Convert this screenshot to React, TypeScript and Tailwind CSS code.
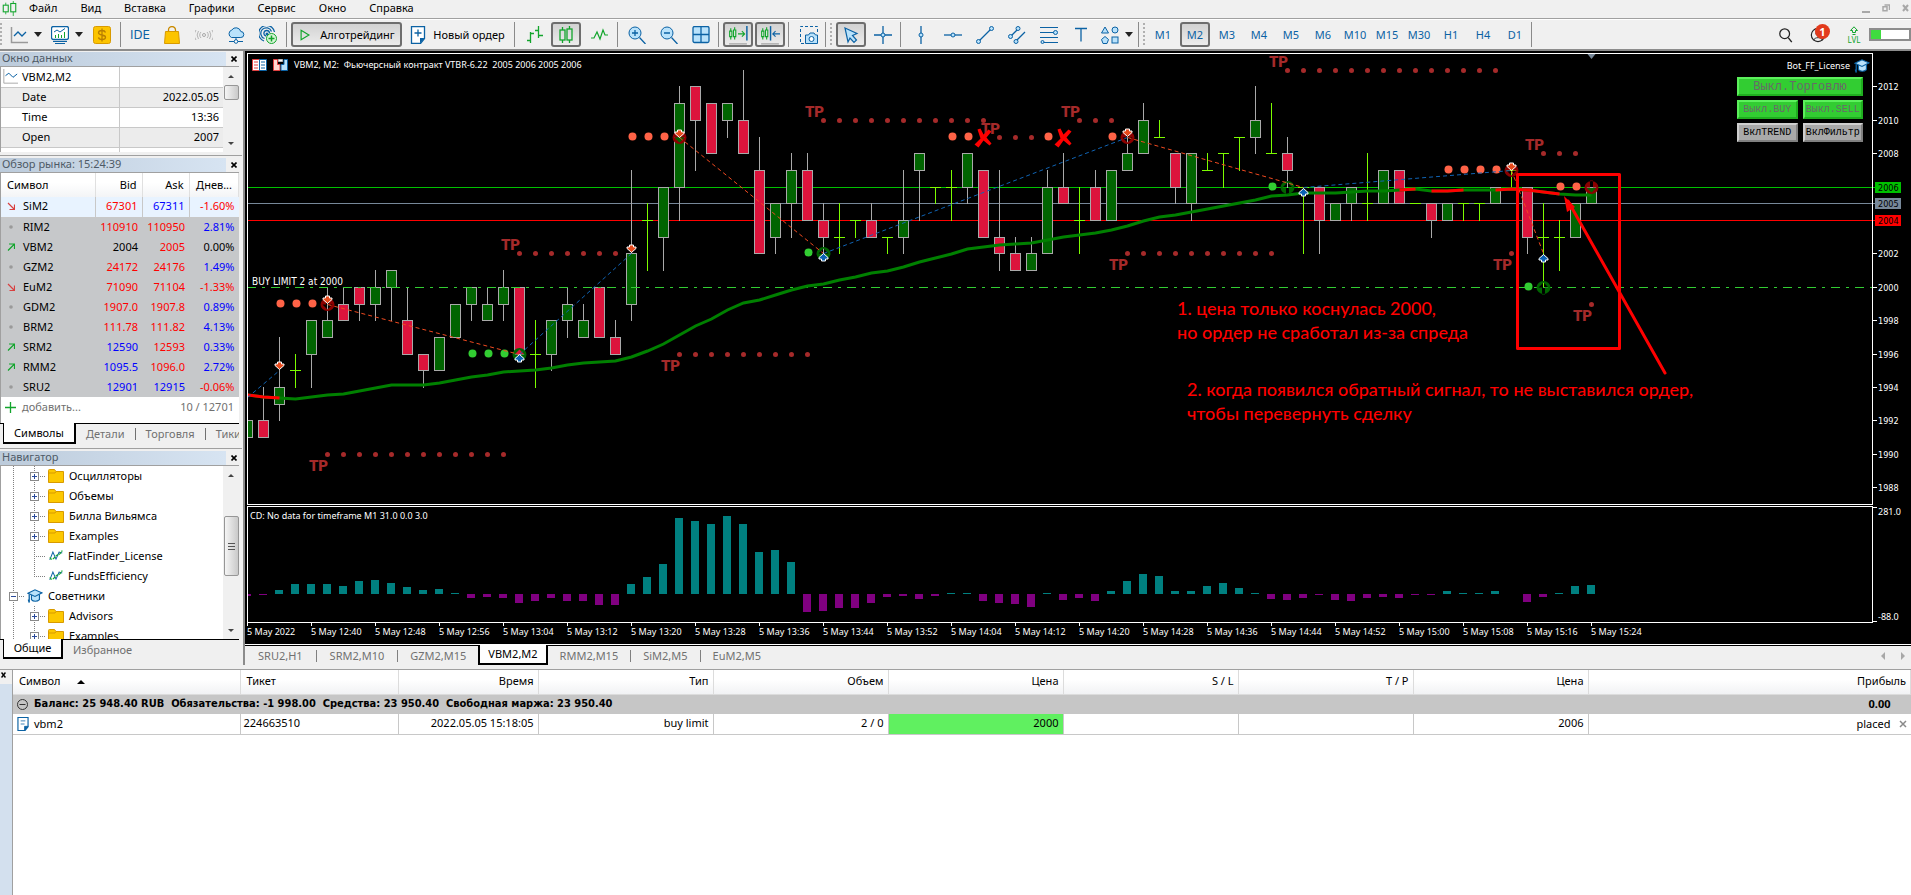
import type React from "react"

type Tone = "red" | "blue" | "black"

const MENU = ["Файл", "Вид", "Вставка", "Графики", "Сервис", "Окно", "Справка"]
const TIMEFRAMES = ["M1", "M2", "M3", "M4", "M5", "M6", "M10", "M15", "M30", "H1", "H4", "D1"]
const CHART_TABS = ["SRU2,H1", "SRM2,M10", "GZM2,M15", "VBM2,M2", "RMM2,M15", "SiM2,M5", "EuM2,M5"]

const DATA_ROWS = [
  ["Date", "2022.05.05"],
  ["Time", "13:36"],
  ["Open", "2007"],
]

interface Quote {
  symbol: string
  dir: "up" | "down" | "flat"
  bid: string
  bidTone: Tone
  ask: string
  askTone: Tone
  day: string
  dayTone: Tone
}

const QUOTES: Quote[] = [
  { symbol: "SiM2", dir: "down", bid: "67301", bidTone: "red", ask: "67311", askTone: "blue", day: "-1.60%", dayTone: "red" },
  { symbol: "RIM2", dir: "flat", bid: "110910", bidTone: "red", ask: "110950", askTone: "red", day: "2.81%", dayTone: "blue" },
  { symbol: "VBM2", dir: "up", bid: "2004", bidTone: "black", ask: "2005", askTone: "red", day: "0.00%", dayTone: "black" },
  { symbol: "GZM2", dir: "flat", bid: "24172", bidTone: "red", ask: "24176", askTone: "red", day: "1.49%", dayTone: "blue" },
  { symbol: "EuM2", dir: "down", bid: "71090", bidTone: "red", ask: "71104", askTone: "red", day: "-1.33%", dayTone: "red" },
  { symbol: "GDM2", dir: "flat", bid: "1907.0", bidTone: "red", ask: "1907.8", askTone: "red", day: "0.89%", dayTone: "blue" },
  { symbol: "BRM2", dir: "flat", bid: "111.78", bidTone: "red", ask: "111.82", askTone: "red", day: "4.13%", dayTone: "blue" },
  { symbol: "SRM2", dir: "up", bid: "12590", bidTone: "blue", ask: "12593", askTone: "red", day: "0.33%", dayTone: "blue" },
  { symbol: "RMM2", dir: "up", bid: "1095.5", bidTone: "blue", ask: "1096.0", askTone: "red", day: "2.72%", dayTone: "blue" },
  { symbol: "SRU2", dir: "flat", bid: "12901", bidTone: "blue", ask: "12915", askTone: "blue", day: "-0.06%", dayTone: "red" },
]

const TONES: Record<Tone, string> = {
  red: "text-[#ff0000]",
  blue: "text-[#0000ff]",
  black: "text-black",
}

// [open, high, low, close], one entry for each bar
const CANDLES: [number, number, number, number][] = [
  [1991, 1992, 1991, 1992], [1992, 1994, 1991, 1991], [1993, 1997, 1992, 1994], [1995, 1996, 1994, 1995],
  [1996, 1998, 1994, 1998], [1997, 2000, 1997, 1998], [1999, 2000, 1998, 1998], [2000, 2000, 1998, 1999],
  [1999, 2001, 1998, 2000], [2000, 2001, 1998, 2001], [1998, 2000, 1996, 1996], [1996, 1996, 1994, 1995],
  [1995, 1997, 1995, 1997], [1997, 1999, 1997, 1999], [1999, 2000, 1998, 2000], [1998, 2000, 1998, 1999],
  [1999, 2001, 1998, 2000], [2000, 2000, 1996, 1996], [1996, 1998, 1994, 1996], [1996, 1998, 1995, 1998],
  [1998, 2000, 1997, 1999], [1997, 1999, 1997, 1998], [2000, 2000, 1997, 1997], [1997, 1998, 1996, 1996],
  [1999, 2007, 1998, 2002], [2004, 2005, 2001, 2004], [2003, 2006, 2001, 2006], [2006, 2012, 2004, 2011],
  [2012, 2012, 2007, 2010], [2011, 2011, 2008, 2008], [2010, 2011, 2009, 2011], [2010, 2013, 2008, 2008],
  [2007, 2009, 2002, 2002], [2003, 2005, 2002, 2005], [2005, 2008, 2003, 2007], [2007, 2008, 2004, 2004],
  [2004, 2005, 2002, 2003], [2003, 2005, 2002, 2003], [2004, 2004, 2003, 2004], [2004, 2005, 2003, 2003],
  [2003, 2003, 2002, 2003], [2003, 2007, 2002, 2004], [2007, 2008, 2004, 2008], [2006, 2006, 2005, 2006],
  [2006, 2007, 2004, 2006], [2006, 2008, 2005, 2008], [2007, 2007, 2003, 2003], [2003, 2007, 2001, 2002],
  [2002, 2003, 2001, 2001], [2001, 2003, 2001, 2002], [2002, 2007, 2002, 2006], [2006, 2008, 2005, 2005],
  [2004, 2006, 2002, 2004], [2006, 2007, 2004, 2004], [2004, 2007, 2004, 2007], [2007, 2009, 2007, 2008],
  [2008, 2011, 2008, 2010], [2009, 2010, 2009, 2009], [2008, 2008, 2005, 2006], [2005, 2008, 2004, 2008],
  [2007, 2008, 2007, 2007], [2008, 2008, 2006, 2008], [2009, 2009, 2007, 2009], [2009, 2012, 2008, 2010],
  [2008, 2011, 2008, 2008], [2008, 2009, 2006, 2007], [2006, 2006, 2002, 2006], [2006, 2006, 2002, 2004],
  [2004, 2005, 2004, 2005], [2005, 2006, 2004, 2006], [2005, 2008, 2004, 2005], [2005, 2007, 2005, 2007],
  [2007, 2007, 2005, 2005], [2005, 2005, 2005, 2005], [2005, 2005, 2003, 2004], [2004, 2005, 2004, 2005],
  [2005, 2005, 2004, 2005], [2005, 2005, 2004, 2005], [2005, 2006, 2005, 2006], [2007, 2007, 2006, 2007],
  [2006, 2006, 2002, 2003], [2003, 2005, 2000, 2003], [2003, 2004, 2001, 2003], [2003, 2005, 2003, 2005],
  [2005, 2006, 2005, 2006],
]

// Moving average, y inside the price pane
const AVERAGE = [
  341, 343, 344, 345, 343, 341, 340, 337, 334, 331, 331, 331, 329, 326, 323, 321, 318, 317, 316, 314, 311, 309, 308,
  307, 303, 297, 290, 281, 272, 265, 256, 249, 246, 241, 236, 232, 230, 226, 223, 219, 217, 213, 208, 204, 200, 195,
  193, 191, 190, 189, 186, 183, 181, 179, 176, 172, 167, 163, 161, 158, 155, 152, 149, 146, 142, 141, 139, 139, 139,
  138, 137, 137, 136, 135, 137, 137, 136, 136, 136, 135, 136, 138, 140, 141, 141,
]
const AVERAGE_DOWN = [[0, 2], [72, 73], [74, 76], [78, 82]]

const DELTA = [
  -2, -1, 4, 10, 10, 10, 8, 13, 14, 11, 7, 4, 5, 1, -4, -3, -4, -9, -7, -4, -7, -7, -11, -11, 10, 17, 30, 76, 73, 70,
  78, 70, 42, 44, 32, -18, -17, -14, -14, -9, -3, -2, -5, -2, 1, 1, -7, -9, -10, -13, 1, -6, -4, -7, 3, 13, 20, 18, 3,
  3, 8, 11, 6, 1, -5, -6, -4, -1, -6, -7, -4, -3, -4, -1, -1, 3, 1, 1, 3, 0, -8, -3, 1, 8, 9,
]

// [first bar, last bar, price, 1 when the label stands above the dots]
const TARGETS = [
  [5, 16, 1990, 0], [17, 23, 2002, 1], [27, 35, 1996, 0], [36, 46, 2010, 1], [47, 51, 2009, 1], [52, 54, 2010, 1],
  [55, 64, 2002, 0], [65, 78, 2013, 1], [79, 79, 2002, 0], [81, 83, 2008, 1], [84, 84, 1999, 0],
]

const SELL_DOTS = [
  [2, 1999], [3, 1999], [4, 1999], [24, 2009], [25, 2009], [26, 2009], [44, 2009], [45, 2009], [50, 2009],
  [54, 2009], [75, 2007], [76, 2007], [77, 2007], [78, 2007], [82, 2006], [83, 2006],
]
const BUY_DOTS = [[14, 1996], [15, 1996], [16, 1996], [35, 2002], [64, 2006], [80, 2000]]
const SELL_SIGNALS = [[5, 1999], [27, 2009], [55, 2009], [79, 2007], [84, 2006]]
const BUY_SIGNALS = [[17, 1996], [36, 2002], [65, 2006], [81, 2000]]
const CANCELLED = [[46, 2009], [51, 2009]]

// [bar, y] of executed deals
const SELL_DEALS = [[2, 311], [5, 245], [24, 194], [27, 79], [55, 78], [79, 112]]
const BUY_DEALS = [[17, 304], [36, 203], [66, 138], [81, 204]]

// [bar, price, bar, price, colour]
const TRADES: [number, number, number, number, string][] = [
  [0, 1993.4, 2, 1995, "#1064b4"], [5, 1999, 17, 1996, "#f04a20"], [17, 1996, 24, 2002, "#1064b4"],
  [27, 2009, 36, 2002, "#f04a20"], [36, 2002, 55, 2009, "#1064b4"], [55, 2009, 66, 2006, "#f04a20"],
  [66, 2006, 79, 2007, "#1064b4"], [79, 2007, 81, 2002, "#f04a20"],
]

const TIMES = [
  "2022", "12:40", "12:48", "12:56", "13:04", "13:12", "13:20", "13:28", "13:36", "13:44", "13:52", "14:04",
  "14:12", "14:20", "14:28", "14:36", "14:44", "14:52", "15:00", "15:08", "15:16", "15:24",
]
const PRICES = [2012, 2010, 2008, 2002, 2000, 1998, 1996, 1994, 1992, 1990, 1988]

const barX = (bar: number) => 16 * bar - 0.5
const priceY = (price: number) => Math.floor(233.3 - (price - 2000) * 16.7) + 0.5

const Icon: React.FC<{ size?: number; className?: string; children: React.ReactNode }> = ({
  size = 18,
  className = "",
  children,
}) => (
  <svg width={size} height={size} viewBox="0 0 18 18" fill="none" className={`shrink-0 ${className}`} aria-hidden="true">
    {children}
  </svg>
)

const BLUE = "#0b62a4"
const GREEN = "#12a52c"
const SKY = "#b9e2fb"

const Separator = () => <div className="h-[25px] w-px shrink-0 bg-[#8a8a8a]" />

const Grip = () => (
  <div className="h-6 w-[2px] shrink-0 bg-[repeating-linear-gradient(#b0b0b0_0_2px,transparent_2px_4px)]" />
)

const Caret = () => <span className="h-0 w-0 shrink-0 border-x-4 border-t-[5px] border-x-transparent border-t-[#222]" />

const ToolButton: React.FC<{ label: string; width?: string; active?: boolean; children: React.ReactNode }> = ({
  label,
  width = "w-8",
  active = false,
  children,
}) => (
  <button
    type="button"
    aria-label={label}
    className={`flex h-[25px] shrink-0 items-center justify-center gap-[6px] ${width} ${
      active ? "rounded-[3px] border-2 border-[#6e6e6e] bg-[linear-gradient(#d2d2d2,#ececec)]" : ""
    }`}
  >
    {children}
  </button>
)

const CandlesIcon = () => (
  <Icon>
    <path d="M5.500 1v3M5.500 14v3M12.500 0v3M12.500 14v3" stroke={GREEN} strokeWidth="1.300" />
    <rect x="3" y="4" width="5" height="10" stroke={GREEN} strokeWidth="1.300" />
    <rect x="10" y="3" width="5" height="11" stroke={GREEN} strokeWidth="1.300" />
  </Icon>
)

const HatIcon: React.FC<{ size?: number }> = ({ size = 16 }) => (
  <Icon size={size}>
    <path d="M5 7v6c2 2.500 6.500 2.500 9 0V7" fill={SKY} stroke={BLUE} strokeWidth="1.300" />
    <path d="M1 6l8-4 8 3.500-8 4z" fill={SKY} stroke={BLUE} strokeWidth="1.300" />
    <path d="M2.500 7v9M1.500 13l1 3.500" stroke={BLUE} strokeWidth="1.500" />
  </Icon>
)

const MenuBar = () => (
  <header className="flex h-[19px] items-center border-b border-[#a0a0a0] pb-[2px]">
    <Icon size={15} className="ml-[2px]">
      <path d="M4.500 2v3M4.500 13v3M13.500 0v3M13.500 13v5" stroke={GREEN} />
      <rect x="1.500" y="5" width="6" height="8" stroke={GREEN} strokeWidth="1.300" />
      <rect x="10.500" y="3" width="6" height="10" stroke={GREEN} strokeWidth="1.300" />
    </Icon>
    <nav className="flex flex-1 gap-[23px] pl-3">
      {MENU.map((item) => (
        <button key={item} type="button">
          {item}
        </button>
      ))}
    </nav>
    <div className="flex items-center gap-3 pr-[2px] text-[#a8a8a8]">
      <button type="button" aria-label="Свернуть" className="mt-2 h-[2px] w-2 bg-[#a8a8a8]" />
      <button type="button" aria-label="Восстановить">
        <svg width="8" height="8" viewBox="0 0 8 8" fill="none" stroke="currentColor" strokeWidth="1.500">
          <path d="M2.500 1h5v5M1 2.800h4v4H1z" />
        </svg>
      </button>
      <button type="button" aria-label="Закрыть">
        <svg width="7" height="8" viewBox="0 0 7 8" fill="none" stroke="currentColor" strokeWidth="2">
          <path d="M1 1l5 6M6 1L1 7" />
        </svg>
      </button>
    </div>
  </header>
)

const Toolbar = () => (
  <div className="flex h-8 items-center overflow-hidden border-t border-b-2 border-t-white border-b-[#8c8c8c]">
    <Grip />
    <div className="w-[2px] shrink-0" />
    <ToolButton label="Новый график" width="w-[44px]">
      <Icon>
        <path d="M1.500 1v15.500H18" stroke="#9a9a9a" strokeWidth="1.500" />
        <path d="M4 10l4-4 4 4 4-4" stroke={BLUE} strokeWidth="1.300" />
      </Icon>
      <Caret />
    </ToolButton>
    <ToolButton label="Профили" width="w-[38px]">
      <Icon>
        <rect x="0.500" y="0.500" width="17" height="13" rx="2" fill="#fff" stroke={BLUE} strokeWidth="1.300" />
        <path d="M3 6l3-2 3 2 5-3.500" stroke={BLUE} />
        <path d="M4.500 12V9M7.500 12V8M10.500 12V9M13.500 12V6" stroke={GREEN} />
        <path d="M2 15.500h14M4 17.500h10" stroke={BLUE} />
      </Icon>
      <Caret />
    </ToolButton>
    <ToolButton label="Котировки">
      <Icon>
        <rect x="0.500" y="0.500" width="17" height="17" rx="2" fill="#fcc400" stroke="#d89a00" />
        <path
          d="M12.500 6.500C12 5 10.800 4.500 9 4.500c-2 0-3.500.800-3.500 2.300 0 3.200 7 1.200 7 4.400 0 1.500-1.500 2.300-3.500 2.300-1.800 0-3.200-.700-3.500-2.200M9 2.500v13"
          stroke="#b97f00"
          strokeWidth="1.300"
        />
      </Icon>
    </ToolButton>
    <div className="w-[2px] shrink-0" />
    <Separator />
    <ToolButton label="IDE" width="w-[38px]">
      <span className="font-['DejaVu_Sans_Condensed'] text-[13px] text-[#0b62a4]">IDE</span>
    </ToolButton>
    <ToolButton label="Маркет" width="w-[26px]">
      <Icon>
        <path d="M5.500 6V4a3.500 3.500 0 017 0v2" stroke="#c98a00" strokeWidth="1.300" />
        <path d="M2.500 5.500h13l1 12h-15z" fill="#fcc400" stroke="#d89a00" />
      </Icon>
    </ToolButton>
    <ToolButton label="Сигналы" width="w-[38px]">
      <Icon>
        <circle cx="9" cy="9" r="1.500" stroke="#a8a8a8" />
        <path d="M6 6a4.200 4.200 0 000 6M12 6a4.200 4.200 0 010 6M3.500 5a7 7 0 000 8M14.500 5a7 7 0 010 8M1 4a9 9 0 000 10M17 4a9 9 0 010 10" stroke="#b4b4b4" />
      </Icon>
    </ToolButton>
    <ToolButton label="VPS" width="w-[26px]">
      <Icon>
        <path d="M4.500 11.500a4 4 0 01.300-7.500 5 5 0 019 1.500 3 3 0 010 6z" fill={SKY} stroke={BLUE} />
        <path d="M9 12v3M2 15.500h14" stroke={BLUE} />
        <circle cx="9" cy="15.500" r="1.800" fill="#fff" stroke={BLUE} />
      </Icon>
    </ToolButton>
    <ToolButton label="Сеть" width="w-[37px]">
      <Icon>
        <path d="M5 15A8 8 0 1115.500 6M5.500 12.500a5.500 5.500 0 117-7M7 10a2.800 2.800 0 113.500-3" stroke={BLUE} strokeWidth="1.300" />
        <circle cx="8" cy="8" r="1.500" fill={BLUE} />
        <circle cx="12.500" cy="12.500" r="5" fill="#d8f5d8" stroke={GREEN} />
        <path d="M12.500 9.500v6M9.500 12.500h6" stroke={GREEN} strokeWidth="1.500" />
      </Icon>
    </ToolButton>
    <Separator />
    <div className="w-1 shrink-0" />
    <button
      type="button"
      className="flex h-[25px] w-[111px] shrink-0 items-center justify-center gap-2 rounded-[3px] border-2 border-[#6e6e6e] bg-[linear-gradient(#d2d2d2,#ececec)]"
    >
      <Icon size={14}>
        <path d="M4 3v12l10-6z" stroke={GREEN} strokeWidth="1.500" />
      </Icon>
      Алготрейдинг
    </button>
    <button type="button" className="flex h-[25px] w-[110px] shrink-0 items-center justify-center gap-[6px]">
      <Icon>
        <path d="M2.500 0.500h13v12l-4 5h-9z" fill="#fff" stroke={BLUE} strokeWidth="1.300" />
        <path d="M15.500 12l-4.500 5.500V12z" fill={BLUE} />
        <path d="M9 3.500v7M5.500 7h7" stroke={BLUE} strokeWidth="1.300" />
      </Icon>
      Новый ордер
    </button>
    <div className="w-[2px] shrink-0" />
    <Separator />
    <div className="w-1 shrink-0" />
    <ToolButton label="Бары">
      <Icon>
        <path d="M4.500 6v11M1 14.500h3.500M4.500 7.500H8M12.500 0v12M9 4.500h3.500M12.500 9.500H17" stroke={GREEN} strokeWidth="1.300" />
      </Icon>
    </ToolButton>
    <ToolButton label="Свечи" width="w-[30px]" active>
      <CandlesIcon />
    </ToolButton>
    <div className="w-[2px] shrink-0" />
    <ToolButton label="Линия">
      <Icon>
        <path d="M1 12h3l3-6 3 7 3-9 2 5h3" stroke={GREEN} strokeWidth="1.200" />
      </Icon>
    </ToolButton>
    <div className="w-[2px] shrink-0" />
    <Separator />
    <div className="w-[3px] shrink-0" />
    <ToolButton label="Увеличить">
      <Icon>
        <circle cx="7" cy="7" r="6" fill={SKY} stroke={BLUE} />
        <path d="M7 4v6M4 7h6M11.500 11.500L17.500 18" stroke={BLUE} strokeWidth="1.300" />
      </Icon>
    </ToolButton>
    <ToolButton label="Уменьшить">
      <Icon>
        <circle cx="7" cy="7" r="6" fill={SKY} stroke={BLUE} />
        <path d="M4 7h6M11.500 11.500L17.500 18" stroke={BLUE} strokeWidth="1.300" />
      </Icon>
    </ToolButton>
    <ToolButton label="Плитка">
      <Icon>
        <rect x="1" y="0.500" width="16" height="16" rx="1.500" fill={SKY} stroke={BLUE} strokeWidth="1.300" />
        <path d="M9 0.500v16M1 8.500h16" stroke={BLUE} strokeWidth="1.300" />
      </Icon>
    </ToolButton>
    <div className="w-px shrink-0" />
    <Separator />
    <div className="w-1 shrink-0" />
    <ToolButton label="Автопрокрутка" width="w-[30px]" active>
      <Icon size={20}>
        <path d="M2.500 3v10M6 2v11" stroke={GREEN} />
        <path d="M1.500 5.500h2v5h-2zM5 4.500h2v6H5z" fill="#eee" stroke={GREEN} />
        <path d="M9 8h6M12.500 5.500L15 8l-2.500 2.500" stroke={GREEN} />
        <path d="M17 1v13" stroke={BLUE} strokeWidth="1.300" />
        <path d="M1 17h16" stroke="#9a9a9a" />
      </Icon>
    </ToolButton>
    <div className="w-[2px] shrink-0" />
    <ToolButton label="Сдвиг графика" width="w-[30px]" active>
      <Icon size={20}>
        <path d="M2.500 3v10M6 2v11" stroke={GREEN} />
        <path d="M1.500 5.500h2v5h-2zM5 4.500h2v6H5z" fill="#eee" stroke={GREEN} />
        <path d="M9.500 1v13" stroke={BLUE} strokeWidth="1.300" />
        <path d="M11.500 8H18M14 5.500L11.500 8l2.500 2.500" stroke={BLUE} />
        <path d="M1 17h16" stroke="#9a9a9a" />
      </Icon>
    </ToolButton>
    <div className="w-[3px] shrink-0" />
    <Separator />
    <div className="w-1 shrink-0" />
    <ToolButton label="Снимок экрана">
      <Icon>
        <path d="M4 17.500H0.500V0.500h17V7" stroke={BLUE} strokeDasharray="3 2" />
        <path d="M5.500 9h3l1.500-2h4l1.500 2h2v8.500h-12z" fill={SKY} stroke={BLUE} />
        <circle cx="11.500" cy="13" r="2.500" fill="#fff" stroke={BLUE} />
      </Icon>
    </ToolButton>
    <Separator />
    <div className="w-1 shrink-0" />
    <Grip />
    <div className="w-1 shrink-0" />
    <ToolButton label="Курсор" width="w-[30px]" active>
      <Icon>
        <path d="M3 2l12 5.500-4.500 2 4 4.500-2.500 2.500-4-4.500-2 4z" fill={SKY} stroke={BLUE} strokeWidth="1.200" />
      </Icon>
    </ToolButton>
    <div className="w-px shrink-0" />
    <ToolButton label="Перекрестие">
      <Icon>
        <path d="M9 0v18M0 9h18" stroke={BLUE} strokeWidth="1.300" />
        <circle cx="9" cy="9" r="2" fill={SKY} stroke={BLUE} />
      </Icon>
    </ToolButton>
    <div className="w-px shrink-0" />
    <Separator />
    <div className="w-1 shrink-0" />
    <ToolButton label="Вертикальная линия">
      <Icon>
        <path d="M9 0v18" stroke={BLUE} strokeWidth="1.300" />
        <circle cx="9" cy="9" r="2" fill={SKY} stroke={BLUE} />
      </Icon>
    </ToolButton>
    <ToolButton label="Горизонтальная линия">
      <Icon>
        <path d="M0 9h18" stroke={BLUE} strokeWidth="1.300" />
        <circle cx="9" cy="9" r="2" fill={SKY} stroke={BLUE} />
      </Icon>
    </ToolButton>
    <ToolButton label="Трендовая линия">
      <Icon>
        <path d="M2 16L16 2" stroke={BLUE} strokeWidth="1.300" />
        <circle cx="2.500" cy="15.500" r="2" fill={SKY} stroke={BLUE} />
        <circle cx="15.500" cy="2.500" r="2" fill={SKY} stroke={BLUE} />
      </Icon>
    </ToolButton>
    <ToolButton label="Канал">
      <Icon>
        <path d="M2 11l8-8M8 15l9-9" stroke={BLUE} strokeWidth="1.300" />
        <circle cx="2.500" cy="10.500" r="2" fill={SKY} stroke={BLUE} />
        <circle cx="10" cy="2.500" r="2" fill={SKY} stroke={BLUE} />
        <circle cx="8" cy="15.500" r="2" fill={SKY} stroke={BLUE} />
      </Icon>
    </ToolButton>
    <ToolButton label="Фибоначчи">
      <Icon>
        <path d="M0 1.500h18M0 6.500h14M0 11.500h18M4 16.500h14" stroke={BLUE} strokeWidth="1.200" />
        <circle cx="15.500" cy="6.500" r="2" fill={SKY} stroke={BLUE} />
        <circle cx="2.500" cy="16" r="1.500" fill={SKY} stroke={BLUE} />
      </Icon>
    </ToolButton>
    <ToolButton label="Текст">
      <Icon>
        <path d="M3 2.500h12M9 2.500v13" stroke={BLUE} strokeWidth="1.300" />
      </Icon>
    </ToolButton>
    <ToolButton label="Фигуры" width="w-[40px]">
      <Icon>
        <path d="M4 1l3.500 6H0.500zM4 10.500l3.500 3-1.500 4H2l-1.500-4z" fill={SKY} stroke={BLUE} />
        <circle cx="14" cy="4" r="3" fill={SKY} stroke={BLUE} />
        <rect x="11" y="11" width="6" height="6" fill={SKY} stroke={BLUE} />
      </Icon>
      <Caret />
    </ToolButton>
    <div className="w-px shrink-0" />
    <Separator />
    <div className="w-1 shrink-0" />
    <Grip />
    <div className="w-[2px] shrink-0" />
    {TIMEFRAMES.map((tf) => (
      <button
        key={tf}
        type="button"
        className={`flex h-[25px] shrink-0 items-center justify-center text-[#0b62a4] ${
          tf === "M2" ? "mx-px w-[30px] rounded-[3px] border-2 border-[#6e6e6e] bg-[linear-gradient(#d2d2d2,#ececec)]" : "w-8"
        }`}
      >
        {tf}
      </button>
    ))}
    <Separator />
    <div className="flex-1" />
    <ToolButton label="Поиск" width="w-8">
      <Icon size={16}>
        <circle cx="7.500" cy="7.500" r="5.500" stroke="#222" strokeWidth="1.400" />
        <path d="M11.500 12l4 5" stroke="#222" strokeWidth="1.600" />
      </Icon>
    </ToolButton>
    <button type="button" aria-label="Уведомления" className="relative flex h-[25px] w-8 shrink-0 items-center justify-center">
      <Icon size={16}>
        <circle cx="9" cy="9" r="7.500" stroke="#222" strokeWidth="1.300" />
        <circle cx="9" cy="7" r="2.500" stroke="#222" />
        <path d="M4 15c1-4 9-4 10 0" stroke="#222" />
      </Icon>
      <span className="absolute top-[2px] right-[4px] flex h-[15px] w-[15px] items-center justify-center rounded-full bg-[#e23a1c] text-[11px] font-bold text-white">
        1
      </span>
    </button>
    <div className="flex w-[77px] shrink-0 items-center justify-end gap-[9px]">
      <div className="flex w-3 flex-col items-center text-[8px] leading-[8px] text-[#12a52c]">
        <svg width="10" height="10" viewBox="0 0 10 10" fill="none" stroke={GREEN}>
          <path d="M5 0.800L8.500 4.500h-2v2h-3v-2h-2zM3.500 8.500h3" />
        </svg>
        LVL
      </div>
      <div className="h-[13px] w-[42px] shrink-0 border-2 border-[#8c8c8c] bg-white">
        <div className="h-full w-[10px] bg-[#3fdc3f]" />
      </div>
    </div>
  </div>
)

const PanelTitle: React.FC<{ children: React.ReactNode }> = ({ children }) => (
  <div className="flex h-[14px] items-center">
    <h2 className="h-full flex-1 bg-[linear-gradient(90deg,#bccbdb,#d7e4f2)] pl-[2px] leading-[12px] text-[#4e5a66]">
      {children}
    </h2>
    <button type="button" aria-label="Закрыть" className="flex w-4 items-center justify-center">
      <svg width="6" height="6" viewBox="0 0 6 6" stroke="#000" strokeWidth="1.600">
        <path d="M0.500 0.500l5 5M5.500 0.500l-5 5" />
      </svg>
    </button>
  </div>
)

const Scrollbar: React.FC<{ thumb: string; before: string; ridges?: boolean }> = ({ thumb, before, ridges }) => (
  <div className="flex w-4 shrink-0 flex-col items-center bg-[#f0f0f0]">
    <div className="flex h-[18px] items-center">
      <span className="h-0 w-0 border-x-[3px] border-b-[3px] border-x-transparent border-b-[#444]" />
    </div>
    <div className={before} />
    <div
      className={`flex w-[15px] flex-col items-center justify-center gap-px rounded-[2px] border border-[#969696] bg-[linear-gradient(90deg,#f5f5f5,#c9c9c9)] ${thumb}`}
    >
      {ridges && (
        <>
          <span className="mb-px h-px w-[7px] bg-[#555]" />
          <span className="mb-px h-px w-[7px] bg-[#555]" />
          <span className="h-px w-[7px] bg-[#555]" />
        </>
      )}
    </div>
    <div className="flex-1" />
    <div className="flex h-[18px] items-center">
      <span className="h-0 w-0 border-x-[3px] border-t-[3px] border-x-transparent border-t-[#444]" />
    </div>
  </div>
)

const DataWindow = () => (
  <section className="pt-px">
    <PanelTitle>Окно данных</PanelTitle>
    <div className="mr-[3px] flex h-[86px] overflow-hidden border-t border-l border-[#a0a0a0] bg-white">
      <div className="flex-1">
        <table className="w-full border-collapse">
          <tbody>
            <tr className="h-5 border-b border-[#c8c8c8]">
              <th scope="row" className="w-[118px] border-r border-[#c8c8c8] p-0 text-left font-normal">
                <span className="flex items-center gap-1 pl-[2px]">
                  <Icon size={15}>
                    <path d="M1 0v17h17" stroke="#9a9a9a" />
                    <path d="M3 8l4-3 5 5 5-4" stroke={BLUE} strokeWidth="1.200" />
                  </Icon>
                  VBM2,M2
                </span>
              </th>
              <td />
            </tr>
            {DATA_ROWS.map(([name, value], i) => (
              <tr key={name} className={`h-5 border-b border-[#c8c8c8] ${i % 2 === 0 ? "bg-[#ececec]" : ""}`}>
                <th scope="row" className="border-r border-[#c8c8c8] p-0 pb-px pl-[21px] text-left font-normal">
                  {name}
                </th>
                <td className="p-0 pr-1 pb-px text-right">{value}</td>
              </tr>
            ))}
            <tr className="h-5">
              <th className="border-r border-[#c8c8c8]" />
              <td />
            </tr>
          </tbody>
        </table>
      </div>
      <Scrollbar before="h-0" thumb="h-[15px]" />
    </div>
  </section>
)

const Direction: React.FC<{ dir: Quote["dir"] }> = ({ dir }) => (
  <svg width="8" height="8" viewBox="0 0 8 8" fill="none" aria-hidden="true" className="shrink-0">
    {dir === "down" && <path d="M1 1l6 6M7.500 2.500v5h-5" stroke="#d84040" strokeWidth="1.200" />}
    {dir === "up" && <path d="M1 7.500l6-6M2 1h5.500v5" stroke={GREEN} strokeWidth="1.200" />}
    {dir === "flat" && <circle cx="4" cy="4" r="1.800" fill="#9a9a9a" />}
  </svg>
)

const MarketWatch = () => (
  <section className="mt-[3px] border-t border-[#a0a0a0] pt-[2px]">
    <PanelTitle>Обзор рынка: 15:24:39</PanelTitle>
    <div className="mr-[3px] border-t border-l border-[#a0a0a0] bg-white">
      <table className="w-full table-fixed border-collapse">
        <thead>
          <tr className="h-6 bg-[linear-gradient(#fff_40%,#f3f4f6)]">
            <th className="w-[94px] border-r border-[#e0e0e0] p-0 pl-[6px] text-left font-normal">Символ</th>
            <th className="w-[47px] border-r border-[#e0e0e0] p-0 pr-[5px] text-right font-normal">Bid</th>
            <th className="w-[47px] border-r border-[#e0e0e0] p-0 pr-[5px] text-right font-normal">Ask</th>
            <th className="border-r border-[#e0e0e0] p-0 pr-[6px] text-right font-normal">Днев...</th>
          </tr>
        </thead>
        <tbody>
          {QUOTES.map((q, i) => (
            <tr
              key={q.symbol}
              className={`h-5 ${i === 0 ? "divide-x divide-[#c8c8c8] border-b border-[#c8c8c8] bg-[#e8f3ff]" : "bg-[#c6c8ca]"}`}
            >
              <td className="p-0 pb-px">
                <span className="flex items-center gap-2 pl-[6px]">
                  <Direction dir={q.dir} />
                  {q.symbol}
                </span>
              </td>
              <td className={`p-0 pr-1 pb-px text-right ${TONES[q.bidTone]}`}>{q.bid}</td>
              <td className={`p-0 pr-1 pb-px text-right ${TONES[q.askTone]}`}>{q.ask}</td>
              <td className={`p-0 pr-1 pb-px text-right ${TONES[q.dayTone]}`}>{q.day}</td>
            </tr>
          ))}
        </tbody>
      </table>
      <div className="flex h-[26px] items-start justify-between pt-[2px] pr-[5px] pl-1 text-[#707070]">
        <button type="button" className="flex items-center gap-[6px]">
          <svg width="11" height="11" viewBox="0 0 11 11" stroke={GREEN} strokeWidth="1.300">
            <path d="M5.500 0v11M0 5.500h11" />
          </svg>
          добавить...
        </button>
        <span>10 / 12701</span>
      </div>
    </div>
    <div className="mr-[3px] flex h-[21px] overflow-hidden whitespace-nowrap text-[#707070]">
      <div className="w-[3px] shrink-0 border-t border-black" />
      <button type="button" className="w-[73px] shrink-0 border border-t-0 border-r-2 border-b-2 border-black bg-white text-black">
        Символы
      </button>
      <div className="flex flex-1 items-center overflow-hidden border-t border-black">
        <button type="button" className="px-[10px]">Детали</button>
        <span className="h-3 w-px shrink-0 bg-[#707070]" />
        <button type="button" className="px-[10px]">Торговля</button>
        <span className="h-3 w-px shrink-0 bg-[#707070]" />
        <button type="button" className="pl-[10px]">Тики</button>
      </div>
    </div>
  </section>
)

interface TreeItem {
  name: string
  kind: "folder" | "indicator" | "experts"
}

const TREE: TreeItem[] = [
  { name: "Осцилляторы", kind: "folder" },
  { name: "Объемы", kind: "folder" },
  { name: "Билла Вильямса", kind: "folder" },
  { name: "Examples", kind: "folder" },
  { name: "FlatFinder_License", kind: "indicator" },
  { name: "FundsEfficiency", kind: "indicator" },
  { name: "Советники", kind: "experts" },
  { name: "Advisors", kind: "folder" },
  { name: "Examples", kind: "folder" },
]

const TreeLines: React.FC<{ item: TreeItem; last: boolean }> = ({ item, last }) => {
  const root = item.kind === "experts"
  const x = root ? 12 : 33
  return (
    <svg width={root ? 24 : 45} height="20" fill="none" className="shrink-0" aria-hidden="true">
      <path d="M12.500 0v20" stroke="#808080" strokeDasharray="1 1" />
      {!root && <path d={last ? "M33.500 0v10" : "M33.500 0v20"} stroke="#808080" strokeDasharray="1 1" />}
      <path d={`M${x} 10.500h12`} stroke="#808080" strokeDasharray="1 1" />
      {item.kind !== "indicator" && (
        <>
          <rect x={x - 3.5} y="6.500" width="8" height="8" fill="#fff" stroke="#8a8a8a" />
          <path d={root ? `M${x - 2} 10.500h5` : `M${x - 2} 10.500h5M${x + 0.5} 8v5`} stroke="#2a4a9a" />
        </>
      )}
    </svg>
  )
}

const Navigator = () => (
  <section className="mt-1 flex flex-1 flex-col border-t border-[#a0a0a0] pt-[2px]">
    <PanelTitle>Навигатор</PanelTitle>
    <div className="mr-[3px] flex h-[174px] overflow-hidden border-t border-l border-[#a0a0a0] bg-white">
      <ul className="flex-1">
        {TREE.map((item, i) => (
          <li key={i} className="flex h-5 items-center">
            <TreeLines item={item} last={i === 5} />
            {item.kind === "folder" && (
              <svg width="16" height="14" viewBox="0 0 16 14" className="ml-[2px]" aria-hidden="true">
                <path d="M0.500 1.500q0-1 1-1h5l1.500 2h7.500v11h-15z" fill="#fcc800" stroke="#d89a00" />
                <path d="M0.500 4h6.500l1-1.500" fill="none" stroke="#d89a00" />
              </svg>
            )}
            {item.kind === "indicator" && (
              <Icon size={14} className="ml-[3px]">
                <path d="M1 14l4-10 4 9 4-9 4 1" stroke={BLUE} strokeWidth="1.300" />
                <path d="M1 11c3 6 7-2 9-3s4 0 7-6" stroke={GREEN} strokeWidth="1.500" strokeDasharray="4 1" />
              </Icon>
            )}
            {item.kind === "experts" && (
              <span className="ml-[2px]">
                <HatIcon />
              </span>
            )}
            <span className="pb-px pl-[5px]">{item.name}</span>
          </li>
        ))}
      </ul>
      <Scrollbar before="h-8" thumb="h-[60px]" ridges />
    </div>
    <div className="mr-[3px] flex h-5 text-[#707070]">
      <div className="w-[3px] shrink-0 border-t border-black" />
      <button type="button" className="w-[60px] shrink-0 border border-t-0 border-r-2 border-b-2 border-black bg-white text-black">
        Общие
      </button>
      <div className="flex flex-1 items-center border-t border-black">
        <button type="button" className="px-[10px]">Избранное</button>
      </div>
    </div>
  </section>
)

const Candle: React.FC<{ bar: number }> = ({ bar }) => {
  const [open, high, low, close] = CANDLES[bar]
  const x = barX(bar)
  if (open === close) {
    return <path d={`M${x} ${priceY(high) - 0.5}V${priceY(low) + 0.5}M${x - 5.5} ${priceY(open)}h11`} stroke="#7cfc00" />
  }
  const top = priceY(Math.max(open, close))
  return (
    <g stroke="#a9a9a9">
      <path d={`M${x} ${priceY(high) - 0.5}V${priceY(low) + 0.5}`} />
      <rect
        x={x - 5}
        y={top}
        width="10"
        height={priceY(Math.min(open, close)) - top}
        fill={close > open ? "#006400" : "#dc143c"}
      />
    </g>
  )
}

const averagePath = (from: number, to: number) =>
  "M" +
  AVERAGE.slice(from, to + 1)
    .map((y, i) => `${barX(from + i)} ${y}`)
    .join("L")

const PricePlot = () => (
  <svg width="100%" height="450" className="block">
    <g shapeRendering="crispEdges">
      <line x1="0" x2="100%" y1={priceY(2006)} y2={priceY(2006)} stroke="#00c000" />
      <line x1="0" x2="100%" y1={priceY(2005)} y2={priceY(2005)} stroke="#778899" />
      <line x1="0" x2="100%" y1={priceY(2004)} y2={priceY(2004)} stroke="#ff0000" />
      {CANDLES.map((_, bar) => (
        <Candle key={bar} bar={bar} />
      ))}
      <line
        x1="0"
        x2="100%"
        y1={priceY(2000)}
        y2={priceY(2000)}
        stroke="#32cd32"
        strokeDasharray="9 6 3 6"
        strokeDashoffset="1"
      />
    </g>

    <path d={averagePath(0, 84)} fill="none" stroke="#008000" strokeWidth="3" />
    {AVERAGE_DOWN.map(([from, to]) => (
      <path key={from} d={averagePath(from, to)} fill="none" stroke="#ff0000" strokeWidth="3" />
    ))}

    {TARGETS.map(([from, to, price, above]) => (
      <g key={`${from}-${price}`} fill="#a52a2a">
        {Array.from({ length: to - from + 1 }, (_, i) => (
          <circle key={i} cx={barX(from + i)} cy={priceY(price)} r="2.500" />
        ))}
        <text
          x={barX(from) - 9}
          y={priceY(price) + (above ? -4 : 16)}
          textAnchor="middle"
          fontFamily="'Roboto', sans-serif"
          fontWeight="900"
          fontSize="15"
        >
          TP
        </text>
      </g>
    ))}

    {SELL_DOTS.map(([bar, price]) => (
      <circle key={bar} cx={barX(bar) + 1} cy={priceY(price) - 1} r="4" fill="#ff6347" />
    ))}
    {BUY_DOTS.map(([bar, price]) => (
      <circle key={bar} cx={barX(bar) + 1} cy={priceY(price) - 1} r="4" fill="#32cd32" />
    ))}
    {SELL_SIGNALS.map(([bar, price]) => (
      <path
        key={bar}
        transform={`translate(${barX(bar)} ${priceY(price)})`}
        d="M-7 0a7 6.500 0 1014 0a7 6.500 0 10-14 0zM-1.500-7h3v7h3.500L0 5-5 0h3.500z"
        fill="#8b0000"
        fillRule="evenodd"
      />
    ))}
    {BUY_SIGNALS.map(([bar, price]) => (
      <path
        key={bar}
        transform={`translate(${barX(bar)} ${priceY(price)})`}
        d="M-7 0a7 6.500 0 1014 0a7 6.500 0 10-14 0zM-1.500 7h3v-7h3.500L0-5-5 0h3.500z"
        fill="#006400"
        fillRule="evenodd"
      />
    ))}
    {CANCELLED.map(([bar, price]) => (
      <path
        key={bar}
        transform={`translate(${barX(bar)} ${priceY(price)})`}
        d="M-6-8l3-1 3 6 5-5 3 2-5 6 5 6-2 2-6-5-5 7-4-3 6-6z"
        fill="#ff0000"
      />
    ))}

    {TRADES.map(([b1, p1, b2, p2, color]) => (
      <line
        key={`${b1}-${b2}`}
        x1={barX(b1)}
        y1={priceY(p1)}
        x2={barX(b2)}
        y2={priceY(p2)}
        stroke={color}
        strokeDasharray="4 3"
      />
    ))}
    {SELL_DEALS.map(([bar, y]) => (
      <path
        key={bar}
        transform={`translate(${barX(bar)} ${y})`}
        d="M-2-3h4v2h2.500v1.500L0 4.500-4.500 0.500V-1H-2z"
        fill="#e84a1c"
        stroke="#fff"
      />
    ))}
    {BUY_DEALS.map(([bar, y]) => (
      <path
        key={bar}
        transform={`translate(${barX(bar)} ${y})`}
        d="M-2 4h4V2h2.500V0.500L0-3.500-4.500 0.500V2H-2z"
        fill="#0b62b4"
        stroke="#fff"
      />
    ))}

    <text x="4" y="231" fill="#fff" fontFamily="'DejaVu Sans Condensed', sans-serif" fontSize="10">
      BUY LIMIT 2 at 2000
    </text>
    <path d={`M${barX(84) - 4} 0h8l-4 5z`} fill="#778899" />

    <g stroke="#ff0000" strokeWidth="3" fill="none">
      <rect x="1269.500" y="120.500" width="102" height="174" strokeLinejoin="round" />
      <path d="M1320 147l97 172" strokeLinecap="round" />
    </g>
    <path d="M1316 142l3 16 8-5z" fill="#ff0000" />
    <g fill="#ff0000" fontFamily="Lato, 'Open Sans', sans-serif" fontSize="18" fontWeight="500">
      <text x="929" y="261">1. цена только коснулась 2000,</text>
      <text x="929" y="285">но ордер не сработал из-за спреда</text>
      <text x="939" y="342">2. когда появился обратный сигнал, то не выставился ордер,</text>
      <text x="939" y="366">чтобы перевернуть сделку</text>
    </g>
  </svg>
)

const PriceAxis = () => (
  <svg
    width="38"
    height="450"
    className="mt-px shrink-0"
    fontFamily="'DejaVu Sans Condensed', sans-serif"
    fontSize="9"
    fill="#fff"
  >
    {PRICES.map((price) => (
      <g key={price}>
        <path d={`M0 ${priceY(price)}h4`} stroke="#fff" />
        <text x="5" y={priceY(price) + 3.5}>{price}</text>
      </g>
    ))}
    {[
      { price: 2006, color: "#00c000" },
      { price: 2005, color: "#778899" },
      { price: 2004, color: "#ff0000" },
    ].map(({ price, color }) => (
      <g key={price}>
        <path d={`M0 ${priceY(price)}h3`} stroke={color} />
        <rect x="2" y={priceY(price) - 5.5} width="26" height="11" fill={color} />
        <text x="5" y={priceY(price) + 3.5} fill="#000">{price}</text>
      </g>
    ))}
  </svg>
)

const CHIP =
  "h-[19px] overflow-hidden whitespace-nowrap border-2 font-['Liberation_Mono',monospace] text-[10px] leading-[14px]"
const GREEN_CHIP = "border-t-[#5cf05c] border-l-[#5cf05c] border-r-[#1fae1f] border-b-[#1fae1f] bg-[#32cd32] text-[#696969]"
const GRAY_CHIP = "border-t-[#cfcfcf] border-l-[#cfcfcf] border-r-[#808080] border-b-[#808080] bg-[#a9a9a9] text-black"

const ChartWindow = () => (
  <section className="flex flex-col bg-black pt-[2px] pl-[2px] font-['Noto_Sans',sans-serif] text-[9px] leading-3 text-white">
    <div className="flex">
      <div className="relative min-w-0 flex-1 overflow-hidden border border-white">
        <PricePlot />
        <div className="absolute top-[5px] left-1 flex items-center gap-[6px] whitespace-pre">
          <svg width="15" height="12" viewBox="0 0 15 12" aria-hidden="true">
            <path d="M0.500 0.500h7v11h-7z" fill="#fff" stroke="#e04040" />
            <path d="M7.500 0.500h7v11h-7z" fill="#fff" stroke={BLUE} />
            <path d="M2 3h4M2 6h4M2 9h4" stroke="#e04040" />
            <path d="M9 3h4M9 6h4M9 9h4" stroke={BLUE} />
          </svg>
          <svg width="15" height="12" viewBox="0 0 15 12" aria-hidden="true">
            <path d="M0.500 0.500h4v5h2.500v6H0.500z" fill="#ffd8d0" stroke="#e04040" />
            <path d="M14.500 0.500h-3.500v5h-3v6h6.500z" fill={SKY} stroke={BLUE} />
            <path d="M5.500 0.500h4v2h-4z" fill="#fff" stroke="#bbb" />
          </svg>
          <h1>VBM2, M2:  Фьючерсный контракт VTBR-6.22  2005 2006 2005 2006</h1>
        </div>
        <div className="absolute top-[4px] right-[2px] flex items-center gap-1">
          Bot_FF_License
          <HatIcon />
        </div>
        <div className="absolute top-[23px] right-[9px] grid w-[126px] grid-cols-2 gap-x-[5px] gap-y-1">
          <button type="button" className={`col-span-2 h-[19px] border-2 font-['Liberation_Mono',monospace] text-[12px] leading-[14px] ${GREEN_CHIP}`}>
            Выкл.Торговлю
          </button>
          <button type="button" className={`${CHIP} ${GREEN_CHIP}`}>Выкл.BUY</button>
          <button type="button" className={`${CHIP} ${GREEN_CHIP}`}>Выкл.SELL</button>
          <button type="button" className={`${CHIP} ${GRAY_CHIP}`}>ВклTREND</button>
          <button type="button" className={`${CHIP} ${GRAY_CHIP}`}>ВклФильтр</button>
        </div>
      </div>
      <PriceAxis />
    </div>

    <div className="mt-px flex">
      <div className="relative min-w-0 flex-1 border border-white">
        <svg width="100%" height="115" className="block" shapeRendering="crispEdges">
          {DELTA.map((value, bar) => (
            <rect
              key={bar}
              x={16 * bar - 5}
              y={value > 0 ? 87 - value : 87}
              width="8"
              height={Math.abs(value)}
              fill={value > 0 ? "#008080" : "#800080"}
            />
          ))}
        </svg>
        <span className="absolute top-[3px] left-[2px]">CD: No data for timeframe M1 31.0 0.0 3.0</span>
      </div>
      <div className="flex w-[38px] shrink-0 flex-col justify-between">
        <div className="flex">
          <span className="mt-px h-px w-1 bg-white" />
          <span className="pl-px">281.0</span>
        </div>
        <div className="flex items-end">
          <span className="mb-px h-px w-1 bg-white" />
          <span className="pl-px">-88.0</span>
        </div>
      </div>
    </div>

    <div className="flex h-[21px] overflow-hidden pr-[38px] whitespace-nowrap">
      {TIMES.map((time) => (
        <div key={time} className="w-16 shrink-0">
          <div className="h-[3px] w-px bg-white" />
          <span>5 May {time}</span>
        </div>
      ))}
    </div>
  </section>
)

const ChartTabs = () => (
  <div className="flex h-5 border-t border-black text-[#707070]">
    {CHART_TABS.map((tab, i) =>
      tab === "VBM2,M2" ? (
        <button key={tab} type="button" className="-mt-px h-5 border-x-2 border-b-2 border-black bg-white px-2 text-black">
          {tab}
        </button>
      ) : (
        <div key={tab} className="flex items-center">
          <button type="button" className={i < 2 ? "px-[13px]" : "px-3"}>{tab}</button>
          {i !== 2 && i !== 6 && <span className="h-3 w-px bg-[#808080]" />}
        </div>
      ),
    )}
    <div className="flex flex-1 items-center justify-end gap-4 pr-[6px]">
      <button type="button" aria-label="Назад" className="h-0 w-0 border-y-[4px] border-r-[4px] border-y-transparent border-r-[#a8a8a8]" />
      <button type="button" aria-label="Вперёд" className="h-0 w-0 border-y-[4px] border-l-[4px] border-y-transparent border-l-[#a8a8a8]" />
    </div>
  </div>
)

const ORDER_COLUMNS = [
  { name: "Символ", width: "w-[227px]", align: "text-left" },
  { name: "Тикет", width: "w-[158px]", align: "text-left" },
  { name: "Время", width: "w-[140px]", align: "text-right" },
  { name: "Тип", width: "w-[175px]", align: "text-right" },
  { name: "Объем", width: "w-[175px]", align: "text-right" },
  { name: "Цена", width: "w-[175px]", align: "text-right" },
  { name: "S / L", width: "w-[175px]", align: "text-right" },
  { name: "T / P", width: "w-[175px]", align: "text-right" },
  { name: "Цена", width: "w-[175px]", align: "text-right" },
  { name: "Прибыль", width: "w-auto", align: "text-right" },
]

const Terminal = () => (
  <section className="mt-1 flex flex-1 border-t border-[#a0a0a0]">
    <div className="flex w-[13px] shrink-0 flex-col border-r border-[#a0a0a0]">
      <button type="button" aria-label="Закрыть" className="flex h-[10px] items-center pl-px">
        <svg width="5" height="6" viewBox="0 0 5 6" stroke="#000" strokeWidth="1.500">
          <path d="M0.500 0.500l4 5M4.500 0.500l-4 5" />
        </svg>
      </button>
      <div className="mt-1 flex-1 bg-[#d3e0ee]" />
    </div>
    <div className="flex-1 bg-white">
      <table className="w-full table-fixed border-collapse">
        <thead>
          <tr className="h-6 bg-[linear-gradient(#fff_40%,#f1f2f4)]">
            {ORDER_COLUMNS.map((col, i) => (
              <th
                key={i}
                className={`border-r border-b border-[#dcdcdc] p-0 pr-1 pb-px pl-[6px] font-normal ${col.width} ${col.align}`}
              >
                {col.name}
                {i === 0 && <span className="ml-4 inline-block border-x-4 border-b-4 border-x-transparent border-b-black align-middle" />}
              </th>
            ))}
          </tr>
        </thead>
        <tbody>
          <tr className="h-5 bg-[#c6c6c6] font-bold">
            <td colSpan={9} className="p-0 font-['DejaVu_Sans_Condensed',sans-serif] whitespace-pre">
              <span className="flex items-center gap-[6px] pl-1">
                <svg width="11" height="11" viewBox="0 0 11 11" fill="none" stroke="#333">
                  <circle cx="5.500" cy="5.500" r="5" />
                  <path d="M2.500 5.500h6" />
                </svg>
                Баланс: 25 948.40 RUB  Обязательства: -1 998.00  Средства: 23 950.40  Свободная маржа: 23 950.40
              </span>
            </td>
            <td className="p-0 pr-5 text-right">0.00</td>
          </tr>
          <tr className="h-5 divide-x divide-[#c8c8c8] border-b border-[#c8c8c8] text-right">
            <td className="p-0">
              <span className="flex items-center gap-1 pl-[3px]">
                <Icon size={14}>
                  <path d="M2.500 0.500h13v12l-4 5h-9z" fill="#fff" stroke={BLUE} strokeWidth="1.500" />
                  <path d="M15.500 12l-4.500 5.500V12zM6 5h6M6 9h5" fill={BLUE} stroke={BLUE} />
                </Icon>
                vbm2
              </span>
            </td>
            <td className="p-0 pb-px pl-[3px] text-left">224663510</td>
            <td className="p-0 pr-1 pb-px">2022.05.05 15:18:05</td>
            <td className="p-0 pr-1 pb-px">buy limit</td>
            <td className="p-0 pr-1 pb-px">2 / 0</td>
            <td className="bg-[#60f060] p-0 pr-1 pb-px">2000</td>
            <td />
            <td />
            <td className="p-0 pr-1 pb-px">2006</td>
            <td className="p-0">
              <span className="flex items-center justify-end gap-2 pr-1">
                placed
                <button type="button" aria-label="Удалить">
                  <svg width="8" height="8" viewBox="0 0 8 8" stroke="#8a8a8a" strokeWidth="1.500">
                    <path d="M1 1l6 6M7 1L1 7" />
                  </svg>
                </button>
              </span>
            </td>
          </tr>
        </tbody>
      </table>
    </div>
  </section>
)

const App: React.FC = () => (
  <div className="flex min-h-screen flex-col overflow-hidden bg-[#f0f0f0] font-['Noto_Sans',sans-serif] text-[11px] leading-4 text-black">
    <MenuBar />
    <Toolbar />
    <main className="flex">
      <aside className="flex w-[243px] shrink-0 flex-col pr-px">
        <DataWindow />
        <MarketWatch />
        <Navigator />
      </aside>
      <div className="min-w-0 flex-1 border-l-2 border-[#8c8c8c]">
        <ChartWindow />
        <div className="h-px bg-white" />
        <ChartTabs />
      </div>
    </main>
    <Terminal />
  </div>
)

export default App
